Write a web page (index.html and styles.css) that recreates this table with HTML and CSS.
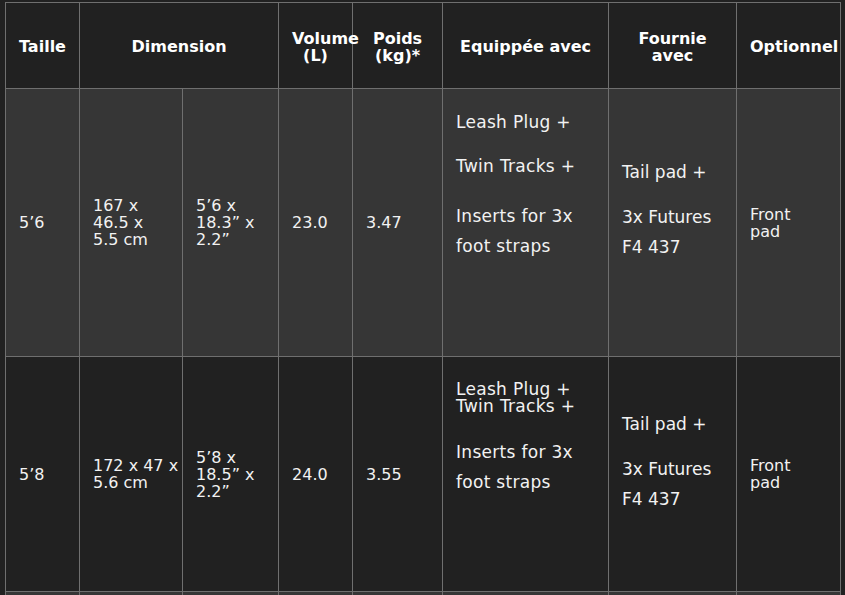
FILE: index.html
```html
<!DOCTYPE html>
<html lang="fr">
<head>
<meta charset="utf-8">
<title>Tableau des tailles</title>
<link rel="stylesheet" href="styles.css">
</head>
<body>
<div class="wrap">
<table class="spec">
  <colgroup>
    <col class="c-size"><col class="c-dim1"><col class="c-dim2"><col class="c-vol"><col class="c-poids"><col class="c-equip"><col class="c-four"><col class="c-opt">
  </colgroup>
  <thead>
    <tr class="head">
      <th>Taille</th>
      <th colspan="2">Dimension</th>
      <th>Volume<br>(L)</th>
      <th>Poids<br>(kg)*</th>
      <th>Equippée avec</th>
      <th>Fournie<br>avec</th>
      <th>Optionnel</th>
    </tr>
  </thead>
  <tbody>
    <tr class="row row-a">
      <td>5’6</td>
      <td>167 x<br>46.5 x<br>5.5 cm</td>
      <td>5’6 x<br>18.3” x<br>2.2”</td>
      <td>23.0</td>
      <td>3.47</td>
      <td class="list equip-a">
        <p class="l1">Leash Plug +</p>
        <p class="l2">Twin Tracks +</p>
        <p class="l3">Inserts for 3x<br>foot straps</p>
      </td>
      <td class="list four-a">
        <p class="l1">Tail pad +</p>
        <p class="l2">3x Futures<br>F4 437</p>
      </td>
      <td>Front<br>pad</td>
    </tr>
    <tr class="row row-b">
      <td>5’8</td>
      <td class="nowrap">172 x 47 x<br>5.6 cm</td>
      <td>5’8 x<br>18.5” x<br>2.2”</td>
      <td>24.0</td>
      <td>3.55</td>
      <td class="list equip-b">
        <p class="tight">Leash Plug +<br>Twin Tracks +</p>
        <p class="l3">Inserts for 3x<br>foot straps</p>
      </td>
      <td class="list four-b">
        <p class="l1">Tail pad +</p>
        <p class="l2">3x Futures<br>F4 437</p>
      </td>
      <td>Front<br>pad</td>
    </tr>
    <tr class="row row-c">
      <td></td><td></td><td></td><td></td><td></td><td></td><td></td><td></td>
    </tr>
  </tbody>
</table>
</div>
</body>
</html>
```

FILE: styles.css
```css
html, body {
  margin: 0;
  padding: 0;
  background: #212121;
  height: 100%;
  overflow: hidden;
}

body {
  font-family: "DejaVu Sans", "Open Sans", sans-serif;
  color: #f2f2f2;
}

.wrap {
  padding: 2px 0 0 5px;
}

.spec {
  border-collapse: collapse;
  table-layout: fixed;
  width: 835px;
}

.c-size { width: 74px; }
.c-dim1 { width: 103px; }
.c-dim2 { width: 96px; }
.c-vol { width: 74px; }
.c-poids { width: 90px; }
.c-equip { width: 166px; }
.c-four { width: 128px; }
.c-opt { width: 104px; }

.spec th,
.spec td {
  border: 1px solid #6f6f6f;
  padding: 0 13px;
  vertical-align: middle;
}

.head {
  height: 86px;
  background: #212121;
}

.spec th {
  font-size: 16px;
  font-weight: 700;
  line-height: 17px;
  color: #ffffff;
  text-align: center;
  white-space: nowrap;
  padding-top: 2px;
}

.spec td {
  font-size: 16px;
  line-height: 17px;
  text-align: left;
}

.spec td.nowrap {
  white-space: nowrap;
  padding-right: 0;
}

.row-a { height: 268px; background: #363636; }
.row-b { height: 235px; background: #212121; }
.row-c { height: 120px; background: #363636; }

.spec td.list {
  vertical-align: top;
  font-size: 17px;
  white-space: nowrap;
}

.spec td.equip-a,
.spec td.equip-b {
  letter-spacing: 0.3px;
}

.list p {
  margin: 0;
  line-height: 30px;
}

.spec td.equip-a { padding-top: 18px; }
.equip-a .l2 { margin-top: 14px; }
.equip-a .l3 { margin-top: 20px; }

.spec td.equip-b { padding-top: 24px; }
.equip-b .tight { line-height: 17px; }
.equip-b .l3 { margin-top: 22px; }

.spec td.four-a { padding-top: 68px; }
.spec td.four-b { padding-top: 52px; }
.four-a .l2,
.four-b .l2 { margin-top: 15px; }
```
